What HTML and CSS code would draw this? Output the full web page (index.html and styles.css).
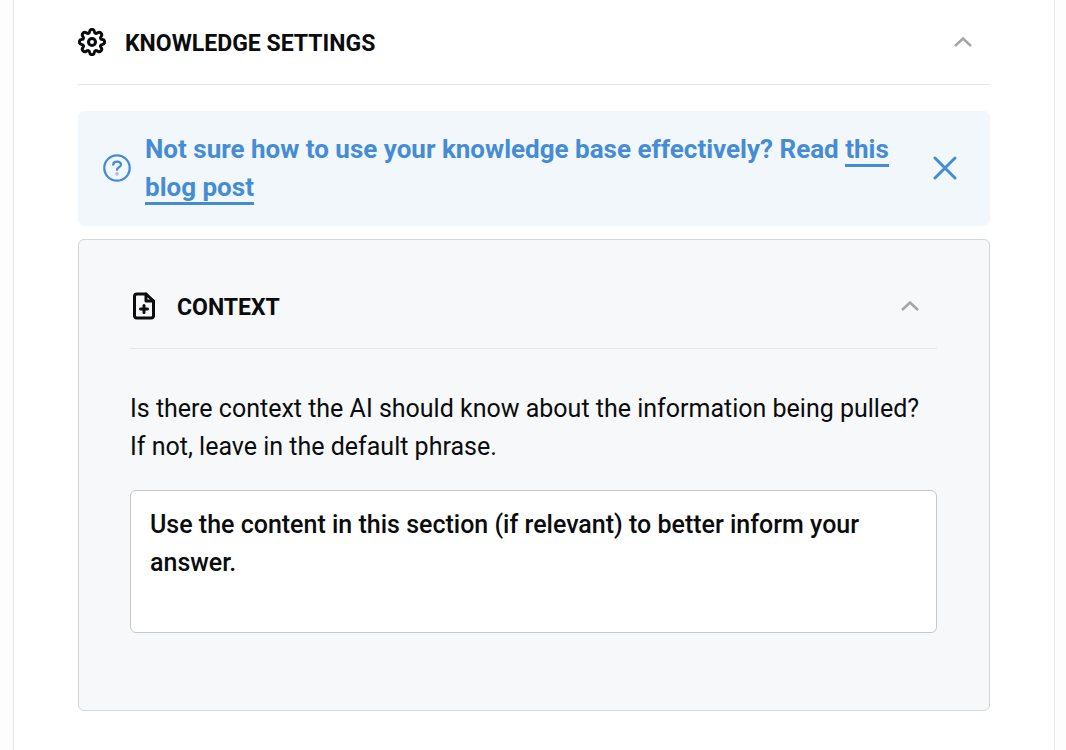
FILE: index.html
```html
<!DOCTYPE html>
<html lang="en">
<head>
<meta charset="utf-8">
<title>Knowledge settings</title>
<link rel="stylesheet" href="styles.css">
</head>
<body>
<main class="panel">
  <header class="section-head">
    <svg class="icon" viewBox="0 0 28 28" fill="none" stroke="currentColor" stroke-width="3" stroke-linejoin="round"><path d="M11.600 3.600C12 .6 16 .6 16.400 3.600C16.700 5.600 18 6 19.700 4.800C22 3.200 24.800 6 23.200 8.300C22 10 22.400 11.300 24.400 11.600C27.400 12 27.400 16 24.400 16.400C22.400 16.700 22 18 23.200 19.700C24.800 22 22 24.800 19.700 23.200C18 22 16.700 22.400 16.400 24.400C16 27.400 12 27.400 11.600 24.400C11.300 22.400 10 22 8.300 23.200C6 24.800 3.200 22 4.800 19.700C6 18 5.600 16.700 3.600 16.400C.6 16 .6 12 3.600 11.600C5.600 11.300 6 10 4.800 8.300C3.200 6 6 3.200 8.300 4.800C10 6 11.300 5.600 11.600 3.600Z"/><circle cx="14" cy="14" r="3.500"/></svg>
    <h1 class="title">KNOWLEDGE SETTINGS</h1>
    <button class="toggle" type="button" aria-label="Collapse knowledge settings"><svg class="chevron" viewBox="0 0 18 10"><path d="M1 9L9 1.500L17 9"/></svg></button>
  </header>
  <aside class="notice">
    <svg class="icon" viewBox="0 0 28 28" fill="none" stroke="currentColor" stroke-width="2.300" stroke-linecap="round"><circle cx="14" cy="14" r="12.700"/><path d="M10.200 10.600C10.600 6.400 18 6.600 18 10.800C18 13.400 14 13.300 14 15.800"/><circle cx="14" cy="20" r=".3"/></svg>
    <p class="notice-text">Not sure how to use your knowledge base effectively? Read <a class="link" href="#">this blog post</a></p>
    <button class="close" type="button" aria-label="Dismiss"><svg class="cross" viewBox="0 0 24 24"><path d="M2 2L22 22M22 2L2 22"/></svg></button>
  </aside>
  <section class="card">
    <header class="section-head">
      <svg class="icon" viewBox="0 0 28 28" fill="none" stroke="currentColor" stroke-width="3" stroke-linejoin="round" stroke-linecap="round"><path d="M16 2H7Q4.500 2 4.500 4.500V23.500Q4.500 26 7 26H21Q23.500 26 23.500 23.500V9Z"/><path d="M16 2V9H23.500M14 13.500V20.500M10.500 17H17.500"/></svg>
      <h2 class="title">CONTEXT</h2>
      <button class="toggle" type="button" aria-label="Collapse context"><svg class="chevron" viewBox="0 0 18 10"><path d="M1 9L9 1.500L17 9"/></svg></button>
    </header>
    <label class="prompt" for="context">Is there context the AI should know about the information being pulled? If not, leave in the default phrase.</label>
    <textarea class="field" id="context" rows="3">Use the content in this section (if relevant) to better inform your answer.</textarea>
  </section>
</main>
</body>
</html>
```
FILE: styles.css
```css
* { box-sizing: border-box; }
body {
  margin: 0;
  padding: 0 11px 0 13px;
  background: #fdfdfd;
  color: #0b0c0d;
  font: 25px/38px Roboto, "Liberation Sans", sans-serif;
}
.panel {
  min-height: 100vh;
  padding: 0 64px 39px;
  border: solid #e5e5e6;
  border-width: 0 1px;
  background: #fff;
}
.section-head {
  display: flex;
  align-items: center;
  height: 85px;
  border-bottom: 1px solid #e6e7e8;
}
.icon { flex: none; width: 28px; height: 28px; }
.title { flex: 1; margin: 0 0 0 19px; padding-top: 3px; font-size: 23px; font-weight: 700; line-height: 28px; }
.toggle, .close {
  display: grid;
  place-items: center;
  padding: 0;
  border: 0;
  background: none;
  color: inherit;
  cursor: pointer;
}
.toggle { width: 20px; height: 28px; margin-right: 17px; }
.chevron { width: 18px; height: 10px; fill: none; stroke: #a5a5a8; stroke-width: 2.500; }
.notice {
  display: flex;
  align-items: center;
  margin-top: 26px;
  padding: 19px 32px 20px 25px;
  border-radius: 6px;
  background: #f1f7fb;
  color: #458cd5;
}
.notice-text { flex: 1; margin: 0 36px 0 14px; font-size: 26px; font-weight: 700; }
.link { color: inherit; text-decoration: none; border-bottom: 3px solid; }
.close { width: 26px; height: 28px; }
.cross { width: 24px; height: 24px; fill: none; stroke: currentColor; stroke-width: 3; stroke-linecap: round; }
.card {
  margin-top: 13px;
  padding: 24px 52px 77px 51px;
  border: 1px solid #d3d5d7;
  border-radius: 6px;
  background: #f6f8fa;
}
.prompt { display: block; margin: 41px 0 24px; }
.field {
  display: block;
  width: 100%;
  height: 143px;
  padding: 15px 19px;
  border: 1px solid #c6c8ca;
  border-radius: 6px;
  background: #fff;
  color: inherit;
  font: inherit;
  font-weight: 500;
  resize: none;
}
```
